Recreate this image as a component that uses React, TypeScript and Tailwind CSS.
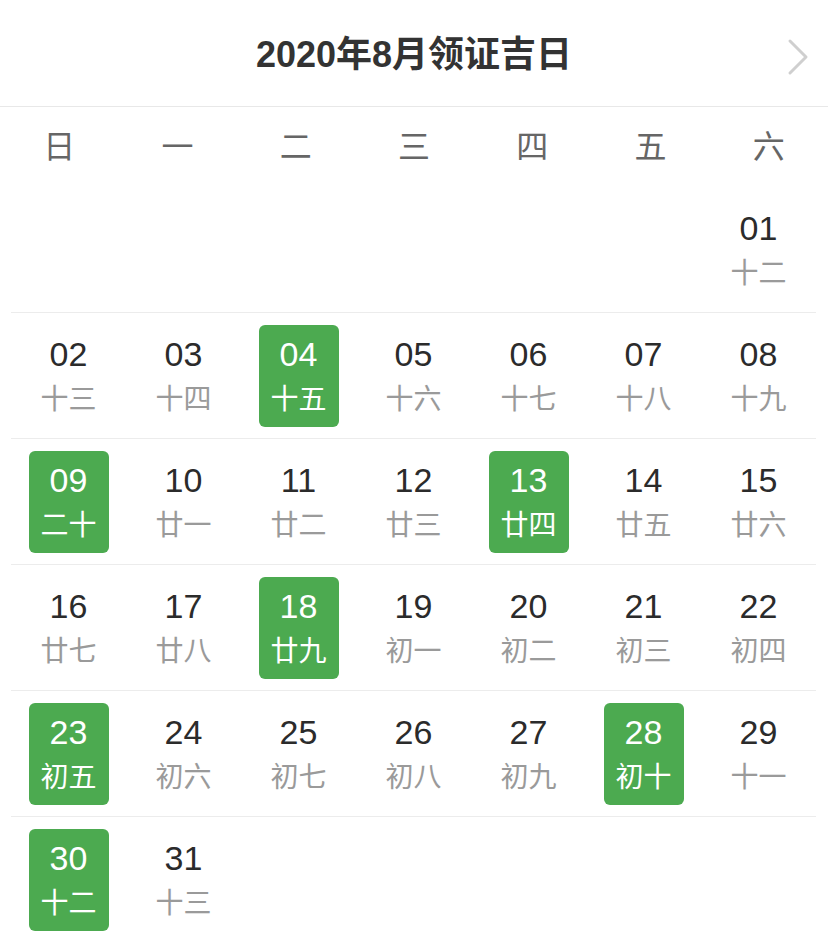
const weekdays = ["日", "一", "二", "三", "四", "五", "六"];

const lunar: Record<number, string> = {
  1: "十二", 2: "十三", 3: "十四", 4: "十五", 5: "十六", 6: "十七", 7: "十八", 8: "十九",
  9: "二十", 10: "廿一", 11: "廿二", 12: "廿三", 13: "廿四", 14: "廿五", 15: "廿六",
  16: "廿七", 17: "廿八", 18: "廿九", 19: "初一", 20: "初二", 21: "初三", 22: "初四",
  23: "初五", 24: "初六", 25: "初七", 26: "初八", 27: "初九", 28: "初十", 29: "十一",
  30: "十二", 31: "十三",
};

const lucky = new Set([4, 9, 13, 18, 23, 28, 30]);

// Aug 2020 starts on a Saturday
const firstWeekday = 6;

function buildWeeks() {
  const cells: (number | null)[] = Array(firstWeekday).fill(null);
  for (let d = 1; d <= 31; d++) cells.push(d);
  while (cells.length % 7 !== 0) cells.push(null);
  const weeks: (number | null)[][] = [];
  for (let i = 0; i < cells.length; i += 7) weeks.push(cells.slice(i, i + 7));
  return weeks;
}

function DayCell({ day }: { day: number | null }) {
  if (day === null) return <div />;
  const on = lucky.has(day);
  return (
    <div className="flex items-center justify-center">
      <div
        className={[
          "flex h-[102px] w-[80px] flex-col items-center justify-center gap-[10px] rounded-[6px]",
          on ? "bg-[#4caa50]" : "",
        ].join(" ")}
      >
        <span className={["text-[34px] leading-[38px]", on ? "text-white" : "text-[#2b2b2b]"].join(" ")}>
          {String(day).padStart(2, "0")}
        </span>
        <span className={["text-[28px] leading-[34px]", on ? "text-white" : "text-[#9a9a9a]"].join(" ")}>
          {lunar[day]}
        </span>
      </div>
    </div>
  );
}

export default function App() {
  const weeks = buildWeeks();
  return (
    <div
      className="h-[938px] w-[828px] overflow-hidden bg-white"
      style={{ fontFamily: '"Liberation Sans", "Noto Sans CJK SC", sans-serif' }}
    >
      <div className="relative flex h-[107px] items-center justify-center border-b border-[#e8e8e8] pt-[4px]">
        <h1 className="text-[36px] font-bold text-[#333]">2020年8月领证吉日</h1>
        <svg
          className="absolute right-[18px] top-[38px]"
          width="24"
          height="38"
          viewBox="0 0 24 38"
          fill="none"
          stroke="#cfcfcf"
          strokeWidth="3"
          strokeLinecap="round"
          strokeLinejoin="round"
        >
          <path d="M4 3 L20 19 L4 35" />
        </svg>
      </div>

      <div className="grid h-[80px] grid-cols-7 items-center">
        {weekdays.map((w) => (
          <div key={w} className="text-center text-[32px] text-[#666]">
            {w}
          </div>
        ))}
      </div>

      <div className="pl-[11px] pr-[12px]">
        {weeks.map((week, i) => (
          <div
            key={i}
            className={[
              "grid h-[126px] grid-cols-7 items-center",
              i < weeks.length - 1 ? "border-b border-[#ececec]" : "",
            ].join(" ")}
          >
            {week.map((d, j) => (
              <DayCell key={j} day={d} />
            ))}
          </div>
        ))}
      </div>
    </div>
  );
}
